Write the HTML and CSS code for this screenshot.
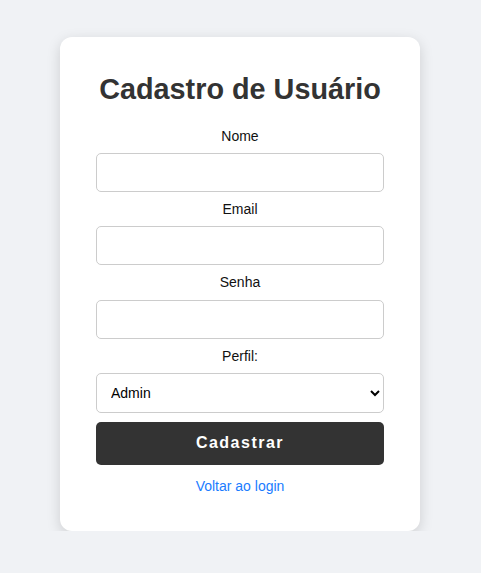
FILE: index.html
```html
<!DOCTYPE html>
<html lang="pt-BR">
<head>
<meta charset="utf-8">
<title>Cadastro de Usuário</title>
<link rel="stylesheet" href="styles.css">
</head>
<body>
<div class="card">
  <h2 class="title">Cadastro de Usuário</h2>
  <form class="form">
    <label class="label" for="nome">Nome</label>
    <input class="field" type="text" id="nome">
    <label class="label" for="email">Email</label>
    <input class="field" type="email" id="email">
    <label class="label" for="senha">Senha</label>
    <input class="field" type="password" id="senha">
    <label class="label" for="perfil">Perfil:</label>
    <select class="field select" id="perfil">
      <option>Admin</option>
      <option>Usuário</option>
    </select>
    <button class="btn" type="button">Cadastrar</button>
    <a class="link" href="#">Voltar ao login</a>
  </form>
</div>
</body>
</html>
```
FILE: styles.css
```css
html, body {
  margin: 0;
  padding: 0;
}
body {
  background: #f0f2f5;
  font-family: "Liberation Sans", Arial, sans-serif;
  padding: 37px 1px 0 0;
}
.card {
  width: 360px;
  box-sizing: border-box;
  margin: 0 auto;
  background: #fff;
  border-radius: 12px;
  box-shadow: 0 4px 14px rgba(0, 0, 0, 0.15);
  padding: 36px 36px 37px;
  text-align: center;
}
.title {
  margin: 0 0 23px;
  font-size: 28.8px;
  line-height: 32px;
  font-weight: bold;
  color: #333;
}
.form {
  display: flex;
  flex-direction: column;
  gap: 9px;
}
.label {
  font-size: 14px;
  line-height: 16.2px;
  color: #111;
}
.field {
  height: 39px;
  box-sizing: border-box;
  border: 1px solid #ccc;
  border-radius: 5px;
  padding: 0 10px;
  font-family: "Liberation Sans", Arial, sans-serif;
  font-size: 14px;
  background: #fff;
  color: #000;
}
.select {
  height: 40px;
}
.btn {
  height: 43px;
  border: none;
  border-radius: 5px;
  background: #333;
  color: #fff;
  font-family: "Liberation Sans", Arial, sans-serif;
  font-size: 16px;
  font-weight: bold;
  letter-spacing: 1.5px;
}
.link {
  margin-top: 4px;
  font-size: 14px;
  line-height: 16px;
  color: #1a7cff;
  text-decoration: none;
}
```
